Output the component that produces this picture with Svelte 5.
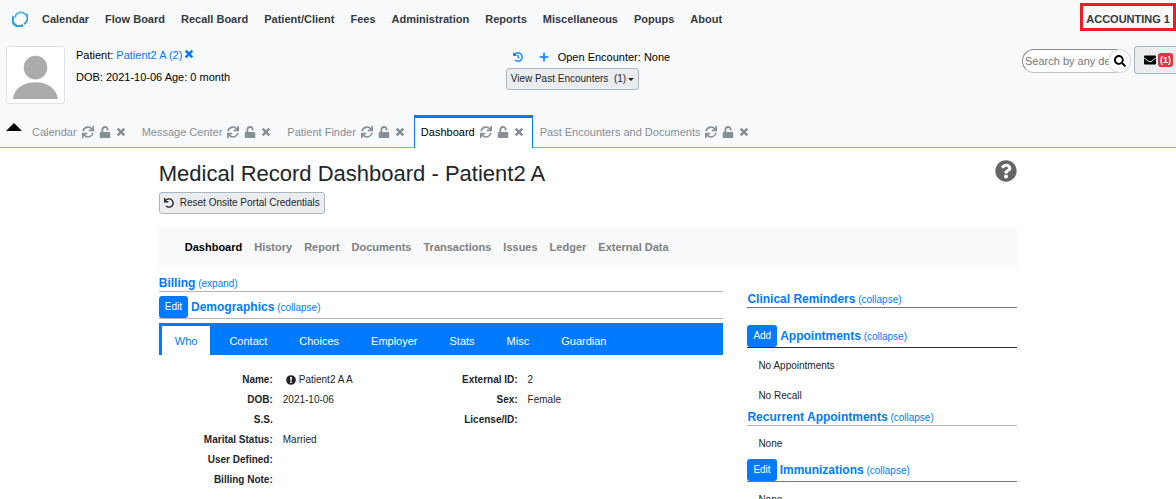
<script>
    const menuItems = ['Calendar', 'Flow Board', 'Recall Board', 'Patient/Client', 'Fees', 'Administration', 'Reports', 'Miscellaneous', 'Popups', 'About'];
    const tabs = ['Calendar', 'Message Center', 'Patient Finder', 'Dashboard', 'Past Encounters and Documents'];
    const recordNav = ['Dashboard', 'History', 'Report', 'Documents', 'Transactions', 'Issues', 'Ledger', 'External Data'];
    const demographicTabs = ['Who', 'Contact', 'Choices', 'Employer', 'Stats', 'Misc', 'Guardian'];

    const fieldGroups = [
        [
            { label: 'Name:', value: 'Patient2 A A', info: true },
            { label: 'DOB:', value: '2021-10-06' },
            { label: 'S.S.', value: '' },
            { label: 'Marital Status:', value: 'Married' },
            { label: 'User Defined:', value: '' },
            { label: 'Billing Note:', value: '' }
        ],
        [
            { label: 'External ID:', value: '2' },
            { label: 'Sex:', value: 'Female' },
            { label: 'License/ID:', value: '' }
        ]
    ];

    const icons = {
        sync: 'M440.65 12.57l4 82.77A247.16 247.16 0 0 0 255.83 8C134.73 8 33.91 94.92 12.29 209.82A12 12 0 0 0 24.09 224h49.05a12 12 0 0 0 11.67-9.26 175.91 175.91 0 0 1 317-56.94l-101.46-4.86a12 12 0 0 0-12.57 12v47.41a12 12 0 0 0 12 12H500a12 12 0 0 0 12-12V12a12 12 0 0 0-12-12h-47.37a12 12 0 0 0-11.98 12.57zM255.83 432a175.61 175.61 0 0 1-146-77.8l101.8 4.87a12 12 0 0 0 12.57-12v-47.4a12 12 0 0 0-12-12H12a12 12 0 0 0-12 12V500a12 12 0 0 0 12 12h47.35a12 12 0 0 0 12-12.6l-4.15-82.57A247.17 247.17 0 0 0 255.83 504c121.11 0 221.93-86.92 243.55-201.82a12 12 0 0 0-11.8-14.18h-49.05a12 12 0 0 0-11.67 9.26A175.86 175.86 0 0 1 255.83 432z',
        unlock: 'M432 256H184V152.9c0-39.6 31.7-72.5 71.3-72.9 40-.4 72.7 32.1 72.7 72v16c0 13.3 10.7 24 24 24h32c13.3 0 24-10.7 24-24v-16C408 68 339.5-.3 255.5 0 171.5.3 104 69.5 104 153.5V256H80c-26.5 0-48 21.5-48 48v160c0 26.5 21.5 48 48 48h352c26.5 0 48-21.5 48-48V304c0-26.5-21.5-48-48-48z',
        times: 'M130 40L256 166 382 40l90 90-126 126 126 126-90 90-126-126-126 126-90-90 126-126L40 130z',
        plus: 'M216 32h80v184h184v80H296v184h-80V296H32v-80h184z',
        history: 'M504 255.531c.253 136.64-111.18 248.372-247.82 248.468-59.015.042-113.223-20.53-155.822-54.911-11.077-8.94-11.905-25.541-1.839-35.607l11.267-11.267c8.609-8.609 22.353-9.551 31.891-1.984C173.062 425.135 212.781 440 256 440c101.705 0 184-82.311 184-184 0-101.705-82.311-184-184-184-48.814 0-93.149 18.969-126.068 49.932l50.754 50.754c10.08 10.08 2.941 27.314-11.313 27.314H24c-8.837 0-16-7.163-16-16V38.627c0-14.254 17.234-21.393 27.314-11.314l49.372 49.372C129.209 34.136 189.552 8 256 8c136.81 0 247.747 110.78 248 247.531zm-180.912 78.784l9.823-12.63c8.138-10.463 6.253-25.542-4.21-33.679L288 256.349V152c0-13.255-10.745-24-24-24h-16c-13.255 0-24 10.745-24 24v135.651l65.409 50.874c10.463 8.137 25.541 6.253 33.679-4.21z',
        undo: 'M212.333 224.333H12c-6.627 0-12-5.373-12-12V12C0 5.373 5.373 0 12 0h48c6.627 0 12 5.373 12 12v78.112C117.773 39.279 184.26 7.47 258.175 8.007c136.906.994 246.448 111.623 246.157 248.532C504.041 393.258 393.12 504 256.333 504c-64.089 0-122.496-24.313-166.51-64.215-5.099-4.622-5.334-12.554-.467-17.42l33.967-33.967c4.474-4.474 11.662-4.717 16.401-.525C170.76 415.336 211.58 432 256.333 432c97.268 0 176-78.716 176-176 0-97.267-78.716-176-176-176-58.496 0-110.28 28.476-142.274 72.333h98.274c6.627 0 12 5.373 12 12v48c0 6.627-5.373 12-12 12z',
        search: 'M505 442.7L405.3 343c-4.5-4.5-10.6-7-17-7H372c27.6-35.3 44-79.7 44-128C416 93.1 322.9 0 208 0S0 93.1 0 208s93.1 208 208 208c48.3 0 92.7-16.4 128-44v16.3c0 6.4 2.5 12.5 7 17l99.7 99.7c9.4 9.4 24.6 9.4 33.9 0l28.3-28.3c9.4-9.4 9.4-24.6.1-34zM208 336c-70.7 0-128-57.2-128-128 0-70.7 57.2-128 128-128 70.7 0 128 57.2 128 128 0 70.7-57.2 128-128 128z',
        envelope: 'M502.3 190.8c3.9-3.1 9.7-.2 9.7 4.7V400c0 26.5-21.5 48-48 48H48c-26.5 0-48-21.5-48-48V195.6c0-5 5.7-7.8 9.7-4.7 22.4 17.4 52.1 39.5 154.1 113.6 21.1 15.4 56.7 47.8 92.2 47.6 35.7.3 72-32.8 92.3-47.6 102-74.1 131.6-96.3 154-113.7zM256 320c23.2.4 56.6-29.2 73.4-41.4 132.7-96.3 142.8-104.7 173.4-128.7 5.8-4.5 9.2-11.5 9.2-18.9v-19c0-26.5-21.5-48-48-48H48c-26.5 0-48 21.5-48 48v19c0 7.4 3.4 14.3 9.2 18.9 30.6 23.9 40.7 32.4 173.4 128.7 16.8 12.2 50.2 41.8 73.4 41.4z',
        question: 'M504 256c0 136.997-111.043 248-248 248S8 392.997 8 256C8 119.083 119.043 8 256 8s248 111.083 248 248zM262.655 90c-54.497 0-89.255 22.957-116.549 63.758-3.536 5.286-2.353 12.415 2.715 16.258l34.699 26.31c5.205 3.947 12.621 3.008 16.665-2.122 17.864-22.658 30.113-35.797 57.303-35.797 20.429 0 45.698 13.148 45.698 32.958 0 14.976-12.363 22.667-32.534 33.976C247.128 238.528 216 254.941 216 296v4c0 6.627 5.373 12 12 12h56c6.627 0 12-5.373 12-12v-1.333c0-28.462 83.186-29.647 83.186-106.667 0-58.002-60.165-102-116.531-102zM256 338c-25.365 0-46 20.635-46 46 0 25.364 20.635 46 46 46s46-20.636 46-46c0-25.364-20.635-46-46-46z',
        info: 'M256 8a248 248 0 1 0 0 496 248 248 0 0 0 0-496zM210 100h92l-12 190h-68zM256 322a44 44 0 1 1 0 88 44 44 0 0 1 0-88z'
    };

    let activeTab = $state('Dashboard');
    let activeDemographic = $state('Who');
    let searchText = $state('');
</script>

{#snippet icon(name, size = 'medium')}
    <svg class="icon {size}" viewBox="0 0 512 512" aria-hidden="true">
        <path fill-rule="evenodd" d={icons[name]} />
    </svg>
{/snippet}

{#snippet sectionTitle(title, state, button, tone)}
    <div class="section-title {tone}">
        {#if button}
            <button class="btn-primary" type="button">{button}</button>
        {/if}
        <a href="#section"><strong>{title}</strong> <small>({state})</small></a>
    </div>
{/snippet}

<div class="app">
    <header>
        <nav class="menu">
            <svg class="logo" viewBox="0 0 32 32" aria-hidden="true">
                <path d="M6 13A12 12 0 0 1 27 7" stroke="#5bb9df" stroke-width="4" />
                <path d="M28 6A13 13 0 0 1 24 26" stroke="#3a9fd0" stroke-width="4" />
                <path d="M3 11A13 13 0 0 0 22 28" stroke="#2f9bd0" stroke-width="5" />
            </svg>
            {#each menuItems as item}
                <a href="#menu">{item}</a>
            {/each}
            <button class="user" type="button">ACCOUNTING 1</button>
        </nav>

        <div class="patient-bar">
            <div class="patient">
                <svg class="avatar" viewBox="0 0 58 57" role="img" aria-label="Patient photo">
                    <circle cx="29" cy="21" r="12" />
                    <path d="M6 53c1-11 11-17 23-17s21 6 23 17z" />
                </svg>
                <div class="patient-info">
                    <div>Patient: <a href="#patient">Patient2 A (2)</a><button class="icon-btn clear" type="button" aria-label="Clear patient">{@render icon('times', 'small')}</button></div>
                    <div>DOB: 2021-10-06 Age: 0 month</div>
                </div>
            </div>
            <div class="encounter">
                <div class="encounter-head">
                    <button class="icon-btn" type="button" aria-label="Encounter history">{@render icon('history', 'small')}</button>
                    <button class="icon-btn" type="button" aria-label="New encounter">{@render icon('plus', 'small')}</button>
                    <span>Open Encounter: None</span>
                </div>
                <button class="btn-secondary" type="button">View Past Encounters &nbsp;(1)<span class="caret"></span></button>
            </div>
            <div class="tools">
                <form class="search">
                    <input type="text" aria-label="Search" placeholder="Search by any demographics" bind:value={searchText} />
                    <button type="button" aria-label="Search">{@render icon('search')}</button>
                </form>
                <button class="mail" type="button" aria-label="Messages">{@render icon('envelope')}<span class="badge">(1)</span></button>
            </div>
        </div>

        <div class="tabs">
            <button class="collapse" type="button" aria-label="Collapse header"><span></span></button>
            {#each tabs as tab}
                <div class="tab" class:active={tab === activeTab}>
                    <button class="tab-name" type="button" onclick={() => activeTab = tab}>{tab}</button>
                    <button type="button" aria-label="Refresh {tab}">{@render icon('sync')}</button>
                    <button type="button" aria-label="Lock {tab}">{@render icon('unlock')}</button>
                    <button type="button" aria-label="Close {tab}">{@render icon('times', 'small')}</button>
                </div>
            {/each}
        </div>
    </header>

    <main>
        <div class="heading">
            <h1>Medical Record Dashboard - Patient2 A</h1>
            <button class="help" type="button" aria-label="Help">{@render icon('question', 'large')}</button>
        </div>
        <button class="btn-secondary reset" type="button">{@render icon('undo', 'small')}Reset Onsite Portal Credentials</button>

        <nav class="record-nav">
            {#each recordNav as item}
                <a href="#record" class:current={item === 'Dashboard'}>{item}</a>
            {/each}
        </nav>

        <div class="columns">
            <section class="left">
                {@render sectionTitle('Billing', 'expand', '', 'light')}
                <div class="demographics">
                    {@render sectionTitle('Demographics', 'collapse', 'Edit', 'light')}
                </div>
                <div class="demographic-tabs">
                    {#each demographicTabs as tab}
                        <button type="button" class:selected={tab === activeDemographic} onclick={() => activeDemographic = tab}>{tab}</button>
                    {/each}
                </div>
                <div class="fields">
                    {#each fieldGroups as group}
                        <dl>
                            {#each group as field}
                                <dt>{field.label}</dt>
                                <dd class:with-info={field.info}>{#if field.info}{@render icon('info', 'small')}{/if}{field.value}</dd>
                            {/each}
                        </dl>
                    {/each}
                </div>
            </section>

            <section class="right">
                {@render sectionTitle('Clinical Reminders', 'collapse', '', 'mid')}
                <div class="appointments">
                    {@render sectionTitle('Appointments', 'collapse', 'Add', 'dark')}
                    <p>No Appointments</p>
                    <p>No Recall</p>
                </div>
                {@render sectionTitle('Recurrent Appointments', 'collapse', '', 'light')}
                <p>None</p>
                {@render sectionTitle('Immunizations', 'collapse', 'Edit', 'mid')}
                <p>None</p>
            </section>
        </div>
    </main>
</div>

<style>
    :global(body) {
        margin: 0;
        background-color: #fff;
    }

    .app {
        height: 100vh;
        overflow: hidden;
        font-family: "Liberation Sans", Arial, sans-serif;
        font-size: 11px;
        line-height: 16px;
        color: #212529;
    }

    .app * {
        box-sizing: border-box;
    }

    a {
        color: #007bff;
        text-decoration: none;
    }

    button,
    input {
        font: inherit;
    }

    button {
        display: inline-flex;
        align-items: center;
        padding: 0;
        border: 0;
        background: none;
        color: inherit;
        cursor: pointer;
        white-space: nowrap;
    }

    .icon {
        display: block;
        flex: none;
        width: 12px;
        height: 12px;
        fill: currentColor;
    }

    .icon.small {
        width: 10px;
        height: 10px;
    }

    .icon.large {
        width: 22px;
        height: 22px;
    }

    header {
        background-color: #f8f9fa;
    }

    .menu {
        display: flex;
        align-items: center;
        gap: 16px;
        height: 38px;
        padding-left: 12px;
    }

    .logo {
        width: 16px;
        height: 16px;
        margin-right: -2px;
        fill: none;
    }

    .menu a,
    .user {
        color: #343a40;
        font-weight: bold;
        white-space: nowrap;
    }

    .user {
        align-self: flex-start;
        height: 28px;
        margin: 3px 0 0 auto;
        padding: 3px 3px 0;
        border: 3px solid #ed1c24;
    }

    .patient-bar {
        display: grid;
        grid-template-columns: 43% 1fr auto;
        padding-top: 8px;
        height: 77px;
        color: #000;
    }

    .patient {
        display: flex;
        gap: 11px;
        padding-left: 6px;
    }

    .avatar {
        width: 59px;
        height: 58px;
        background-color: #fff;
        border: 1px solid #dee2e6;
        border-radius: 3px;
        fill: #ababab;
    }

    .patient-info {
        margin-top: -2px;
        line-height: 22px;
    }

    .icon-btn {
        color: #007bff;
    }

    .clear {
        margin-left: 2px;
    }

    .encounter-head {
        display: flex;
        align-items: center;
        gap: 16px;
        height: 22px;
        padding-left: 7px;
    }

    .encounter-head span {
        margin-left: -7px;
    }

    .btn-secondary {
        height: 22px;
        padding: 0 4px;
        border: 1px solid #adb5bd;
        border-radius: 3px;
        background-color: #ebecee;
        color: #212529;
        font-size: 10px;
    }

    .caret {
        margin-left: 2px;
        border: 3px solid transparent;
        border-top-color: #212529;
        border-bottom: 0;
    }

    .tools {
        display: flex;
        align-items: flex-start;
        gap: 3px;
        width: 154px;
    }

    .search {
        display: flex;
        flex: none;
        margin-top: 3px;
    }

    .search input {
        width: 97px;
        height: 24px;
        padding: 0 0 0 2px;
        border: 1px solid #c4c4c4;
        border-top-color: #8a8a8a;
        border-left-color: #8a8a8a;
        border-radius: 12px 0 0 12px;
        color: #212529;
        outline: none;
    }

    .search input::placeholder {
        color: #757575;
        opacity: 1;
    }

    .search button {
        justify-content: center;
        width: 23px;
        height: 24px;
        margin-left: -11px;
        border: 1px solid #ced4da;
        border-radius: 12px;
        background-color: #fff;
    }

    .mail {
        flex: none;
        gap: 2px;
        height: 28px;
        padding: 0 9px;
        border: 1px solid #adb5bd;
        border-radius: 3px;
        background-color: #ebecee;
    }

    .badge {
        padding: 0 2px;
        border-radius: 3px;
        background-color: #dc3545;
        color: #fff;
        font-size: 9px;
        font-weight: bold;
        line-height: 14px;
    }

    .tabs {
        display: flex;
        height: 33px;
        border-bottom: 1px solid #6fb3f8;
    }

    .collapse {
        align-self: flex-start;
        padding: 8px 3px 0 6px;
    }

    .collapse span {
        border: 8px solid transparent;
        border-bottom-color: #000;
        border-top: 0;
    }

    .tab {
        display: flex;
        align-items: center;
        gap: 5px;
        height: 33px;
        padding: 0 8px 2px 6px;
        border: 1px solid transparent;
        border-width: 3px 1px 0;
        color: #868e96;
    }

    .tab.active {
        border-color: #007bff;
        background-color: #fff;
    }

    .active .tab-name {
        color: #000;
    }

    main {
        width: 73%;
        margin: 0 auto;
        padding-top: 10px;
    }

    .heading {
        display: flex;
        justify-content: space-between;
        align-items: center;
        height: 32px;
        margin-bottom: 2px;
    }

    h1 {
        margin: 0;
        font-size: 22px;
        font-weight: normal;
        line-height: 32px;
    }

    .help {
        align-self: flex-start;
        padding-top: 2px;
        color: #666;
    }

    .reset {
        gap: 6px;
    }

    .record-nav {
        display: flex;
        align-items: center;
        gap: 12px;
        height: 40px;
        margin-top: 13px;
        padding-left: 26px;
        background-color: #f8f9fa;
    }

    .record-nav a {
        color: #7f7f7f;
        font-weight: bold;
    }

    .record-nav a.current {
        color: #000;
    }

    .columns {
        display: grid;
        grid-template-columns: 565fr 270fr;
        column-gap: 24px;
        font-size: 10px;
    }

    .left {
        padding-top: 9px;
    }

    .right {
        padding-top: 25px;
    }

    .section-title {
        display: flex;
        align-items: center;
        gap: 3px;
        border-bottom: 1px solid #b4b4b4;
    }

    .section-title.mid {
        border-color: #777;
    }

    .section-title.dark {
        border-color: #333;
    }

    .section-title a {
        line-height: 14px;
    }

    .section-title strong {
        font-size: 12px;
    }

    .section-title small {
        font-size: 10px;
    }

    .btn-primary {
        height: 22px;
        padding: 0 6px;
        border-radius: 3px;
        background-color: #007bff;
        color: #fff;
    }

    .demographics {
        margin: 4px 0;
    }

    .demographic-tabs {
        display: flex;
        height: 32px;
        padding: 3px 3px 0;
        background-color: #007bff;
        color: #fff;
        font-size: 11px;
    }

    .demographic-tabs button {
        margin-right: 6px;
        padding: 0 13px;
    }

    .demographic-tabs .selected {
        background-color: #fff;
        color: #007bff;
    }

    .fields {
        display: grid;
        grid-template-columns: 245fr 320fr;
        align-items: start;
        padding-top: 15px;
    }

    dl {
        display: grid;
        grid-template-columns: 114px 1fr;
        grid-auto-rows: 20px;
        column-gap: 10px;
        margin: 0;
        line-height: 20px;
    }

    dt {
        font-weight: bold;
        text-align: right;
    }

    dd {
        margin: 0;
    }

    .with-info {
        display: flex;
        align-items: center;
        gap: 3px;
        padding-left: 3px;
    }

    .appointments {
        margin-top: 17px;
    }

    p {
        margin: 8px 0 5px;
        padding-left: 11px;
        line-height: 20px;
    }

    .appointments p + p {
        margin: 10px 0 4px;
    }
</style>
